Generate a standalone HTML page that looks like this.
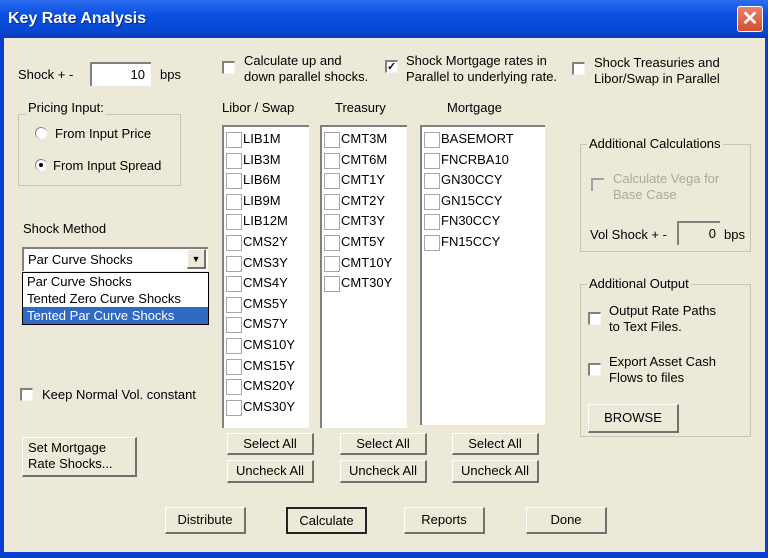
<!DOCTYPE html>
<html><head><style>
*{margin:0;padding:0;box-sizing:border-box}
body{width:768px;height:558px;overflow:hidden;background:#0a3fd0;font-family:"Liberation Sans",sans-serif;font-size:13px;color:#000;position:relative}
.a{position:absolute}
#title{left:0;top:0;width:768px;height:38px;background:linear-gradient(#2c6cf0,#0a4fe0 40%,#0748d4 80%,#0a3cb8);}
#title span{position:absolute;left:8px;top:10px;color:#fff;font-weight:bold;font-size:16px;text-shadow:1px 1px #0a2a80}
#close{left:737px;top:6px;width:26px;height:26px;border:1px solid #fff;border-radius:3px;background:linear-gradient(#e8806a,#d4502c);color:#fff;font-size:20px;font-weight:bold;text-align:center;line-height:24px}
#body{left:4px;top:38px;width:761px;height:514px;background:#ece9d8}
.cb{position:absolute;width:13px;height:13px;background:#fff;border-top:2px solid #808080;border-left:2px solid #808080;border-right:1px solid #f4f4f4;border-bottom:1px solid #f4f4f4}
.cbl{position:absolute;width:13px;height:13px;border:1px solid #a0a0a0;background:#fff}
.btn{position:absolute;background:#ece9d8;border-top:1px solid #fff;border-left:1px solid #fff;border-right:2px solid #707070;border-bottom:2px solid #707070;text-align:center;font-size:13px}
.grp{position:absolute;border:1px solid #c8c4b4}
.leg{position:absolute;background:#ece9d8;padding:0 2px;font-size:13px}
.lb{position:absolute;background:#fff;border-top:2px solid #808080;border-left:2px solid #808080}
.it{position:absolute;left:2px;height:20px;line-height:20px;font-size:13px;padding-left:17px}
.it:before{content:"";position:absolute;left:0;top:3px;width:14px;height:14px;border:1px solid #a8a8a8;background:#fff}
.inp{position:absolute;background:#fff;border-top:2px solid #808080;border-left:2px solid #808080;text-align:right;padding-right:6px;font-size:13px}
.rad{position:absolute;width:12px;height:12px;border-radius:50%;border-top:1px solid #808080;border-left:1px solid #808080;background:#fff}
</style></head><body>
<div id="title" class="a"><span>Key Rate Analysis</span></div>
<div id="close" class="a">✕</div>
<div id="body" class="a"></div>

<div class="a" style="left:18px;top:67px">Shock + -</div>
<div class="inp" style="left:90px;top:62px;width:61px;height:24px;line-height:22px">10</div>
<div class="a" style="left:160px;top:67px">bps</div>

<div class="grp" style="left:18px;top:114px;width:163px;height:72px"></div>
<div class="leg" style="left:26px;top:100px">Pricing Input:</div>
<div class="rad" style="left:35px;top:127px"></div>
<div class="a" style="left:55px;top:126px">From Input Price</div>
<div class="rad" style="left:35px;top:159px"><div style="position:absolute;left:3px;top:3px;width:4px;height:4px;border-radius:50%;background:#000"></div></div>
<div class="a" style="left:53px;top:158px">From Input Spread</div>

<div class="a" style="left:23px;top:221px">Shock Method</div>
<div class="inp" style="left:22px;top:247px;width:186px;height:24px;text-align:left;padding-left:4px;line-height:21px">Par Curve Shocks</div>
<div class="btn" style="left:187px;top:249px;width:19px;height:20px;font-size:9px;line-height:18px">▼</div>
<div class="a" style="left:22px;top:272px;width:187px;height:53px;background:#fff;border:1px solid #000">
<div style="height:17px;line-height:17px;padding-left:4px">Par Curve Shocks</div>
<div style="height:17px;line-height:17px;padding-left:4px">Tented Zero Curve Shocks</div>
<div style="height:17px;line-height:17px;padding-left:4px;background:#316ac5;color:#fff">Tented Par Curve Shocks</div>
</div>

<div class="cb" style="left:20px;top:388px"></div>
<div class="a" style="left:42px;top:387px">Keep Normal Vol. constant</div>
<div class="btn" style="left:22px;top:437px;width:115px;height:40px;text-align:left;padding:2px 0 0 5px;line-height:16px">Set Mortgage<br>Rate Shocks...</div>

<div class="cb" style="left:222px;top:61px"></div>
<div class="a" style="left:244px;top:53px;line-height:16px">Calculate up and<br>down parallel shocks.</div>
<div class="cb" style="left:385px;top:60px;font-size:11px;line-height:10px;font-weight:bold">✓</div>
<div class="a" style="left:406px;top:53px;line-height:16px">Shock Mortgage rates in<br>Parallel to underlying rate.</div>
<div class="cb" style="left:572px;top:62px"></div>
<div class="a" style="left:594px;top:55px;line-height:16px">Shock Treasuries and<br>Libor/Swap in Parallel</div>

<div class="a" style="left:222px;top:100px">Libor / Swap</div>
<div class="a" style="left:335px;top:100px">Treasury</div>
<div class="a" style="left:447px;top:100px">Mortgage</div>

<div class="lb" style="left:222px;top:125px;width:87px;height:303px">
<div class="it" style="top:2px">LIB1M</div><div class="it" style="top:22.6px">LIB3M</div><div class="it" style="top:43.2px">LIB6M</div><div class="it" style="top:63.8px">LIB9M</div><div class="it" style="top:84.4px">LIB12M</div><div class="it" style="top:105px">CMS2Y</div><div class="it" style="top:125.6px">CMS3Y</div><div class="it" style="top:146.2px">CMS4Y</div><div class="it" style="top:166.8px">CMS5Y</div><div class="it" style="top:187.4px">CMS7Y</div><div class="it" style="top:208px">CMS10Y</div><div class="it" style="top:228.6px">CMS15Y</div><div class="it" style="top:249.2px">CMS20Y</div><div class="it" style="top:269.8px">CMS30Y</div>
</div>
<div class="lb" style="left:320px;top:125px;width:87px;height:303px">
<div class="it" style="top:2px">CMT3M</div><div class="it" style="top:22.6px">CMT6M</div><div class="it" style="top:43.2px">CMT1Y</div><div class="it" style="top:63.8px">CMT2Y</div><div class="it" style="top:84.4px">CMT3Y</div><div class="it" style="top:105px">CMT5Y</div><div class="it" style="top:125.6px">CMT10Y</div><div class="it" style="top:146.2px">CMT30Y</div>
</div>
<div class="lb" style="left:420px;top:125px;width:125px;height:300px">
<div class="it" style="top:2px">BASEMORT</div><div class="it" style="top:22.6px">FNCRBA10</div><div class="it" style="top:43.2px">GN30CCY</div><div class="it" style="top:63.8px">GN15CCY</div><div class="it" style="top:84.4px">FN30CCY</div><div class="it" style="top:105px">FN15CCY</div>
</div>

<div class="btn" style="left:227px;top:433px;width:87px;height:22px;line-height:19px">Select All</div>
<div class="btn" style="left:227px;top:460px;width:87px;height:23px;line-height:20px">Uncheck All</div>
<div class="btn" style="left:340px;top:433px;width:87px;height:22px;line-height:19px">Select All</div>
<div class="btn" style="left:340px;top:460px;width:87px;height:23px;line-height:20px">Uncheck All</div>
<div class="btn" style="left:452px;top:433px;width:87px;height:22px;line-height:19px">Select All</div>
<div class="btn" style="left:452px;top:460px;width:87px;height:23px;line-height:20px">Uncheck All</div>

<div class="grp" style="left:580px;top:144px;width:171px;height:108px"></div>
<div class="leg" style="left:587px;top:136px">Additional Calculations</div>
<div class="a" style="left:591px;top:178px;width:13px;height:13px;border-top:2px solid #a0a0a0;border-left:2px solid #a0a0a0;background:#ece9d8"></div>
<div class="a" style="left:613px;top:171px;line-height:16px;color:#aca899">Calculate Vega for<br>Base Case</div>
<div class="a" style="left:590px;top:227px">Vol Shock + -</div>
<div class="a" style="left:677px;top:221px;width:43px;height:24px;border-top:2px solid #808080;border-left:2px solid #808080;text-align:right;padding-right:4px;line-height:22px">0</div>
<div class="a" style="left:724px;top:227px">bps</div>

<div class="grp" style="left:580px;top:284px;width:171px;height:153px"></div>
<div class="leg" style="left:587px;top:276px">Additional Output</div>
<div class="cb" style="left:588px;top:312px"></div>
<div class="a" style="left:609px;top:303px;line-height:16px">Output Rate Paths<br>to Text Files.</div>
<div class="cb" style="left:588px;top:363px"></div>
<div class="a" style="left:609px;top:354px;line-height:16px">Export Asset Cash<br>Flows to files</div>
<div class="btn" style="left:588px;top:404px;width:91px;height:29px;line-height:26px">BROWSE</div>

<div class="btn" style="left:165px;top:507px;width:81px;height:27px;line-height:24px">Distribute</div>
<div class="btn" style="left:286px;top:507px;width:81px;height:27px;line-height:23px;border:2px solid #222">Calculate</div>
<div class="btn" style="left:404px;top:507px;width:81px;height:27px;line-height:24px">Reports</div>
<div class="btn" style="left:526px;top:507px;width:81px;height:27px;line-height:24px">Done</div>
</body></html>
